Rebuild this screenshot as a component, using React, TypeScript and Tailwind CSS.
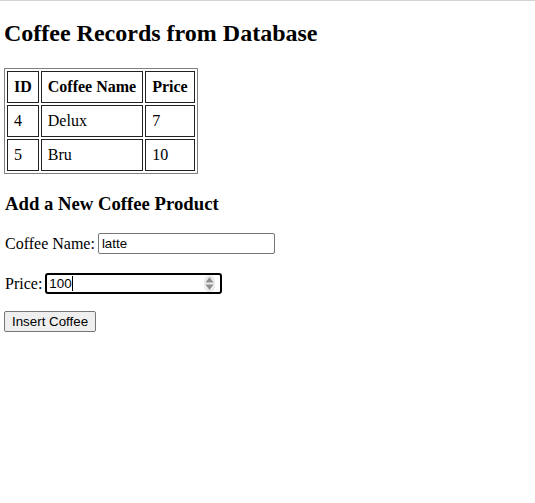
import { useState } from 'react';

const coffees = [
    { id: 4, name: 'Delux', price: 7 },
    { id: 5, name: 'Bru', price: 10 },
];

export default function App() {
    const [name, setName] = useState('latte');

    return (
        <div className="min-h-[503px] bg-white border-t border-[#d3d3d3] pl-1 text-black text-[16px] font-['Liberation_Serif',serif]">
            <h2 className="mt-[18px] mb-[21px] text-[24px] font-bold leading-[28px]">Coffee Records from Database</h2>

            <table className="border border-[#808080] border-separate border-spacing-[2px]">
                <thead>
                    <tr>
                        <th className="border border-[#222] px-[6px] py-[6px] h-[32px] text-left font-bold leading-[18px]">ID</th>
                        <th className="border border-[#222] px-[6px] py-[6px] text-left font-bold leading-[18px]">Coffee Name</th>
                        <th className="border border-[#222] px-[6px] py-[6px] text-left font-bold leading-[18px]">Price</th>
                    </tr>
                </thead>
                <tbody>
                    {coffees.map((c) => (
                        <tr key={c.id}>
                            <td className="border border-[#222] px-[6px] py-[6px] h-[31px] leading-[18px]">{c.id}</td>
                            <td className="border border-[#222] px-[6px] py-[6px] leading-[18px]">{c.name}</td>
                            <td className="border border-[#222] px-[6px] py-[6px] leading-[18px]">{c.price}</td>
                        </tr>
                    ))}
                </tbody>
            </table>

            <h3 className="mt-[19px] mb-[18px] pl-px text-[18.72px] font-bold leading-[22px]">Add a New Coffee Product</h3>

            <div className="flex flex-col">
                <div className="flex items-center h-[21px] pl-px">
                    <span>Coffee Name:</span>
                    <input
                        type="text"
                        value={name}
                        onChange={(e) => setName(e.target.value)}
                        className="ml-[3px] w-[177px] h-[21px] border border-[#767676] rounded-[2px] px-[3px] text-[13.33px] font-['Liberation_Sans',sans-serif] outline-none"
                    />
                </div>

                <div className="flex items-center h-[21px] mt-[19px] pl-px">
                    <span>Price:</span>
                    <div className="ml-[3px] w-[177px] h-[21px] border-2 border-black rounded-[3px] px-[2px] flex items-center text-[13.33px] font-['Liberation_Sans',sans-serif]">
                        <span>100</span>
                        <span className="w-px h-[15px] bg-black" />
                        <span className="flex-1" />
                        <svg width="11" height="17" viewBox="0 0 11 17" className="mr-[3px]">
                            <rect x="0" y="0" width="11" height="17" rx="5.5" fill="#ececec" />
                            <path d="M1.5 7.5 L5.5 2 L9.5 7.5 Z" fill="#8f8f8f" />
                            <path d="M1.5 9.5 L5.5 15 L9.5 9.5 Z" fill="#8f8f8f" />
                        </svg>
                    </div>
                </div>

                <div className="mt-[15px]">
                    <button className="h-[21px] px-[7px] bg-[#efefef] border border-[#767676] rounded-[2px] text-[13.33px] font-['Liberation_Sans',sans-serif] leading-none">
                        Insert Coffee
                    </button>
                </div>
            </div>
        </div>
    );
}
